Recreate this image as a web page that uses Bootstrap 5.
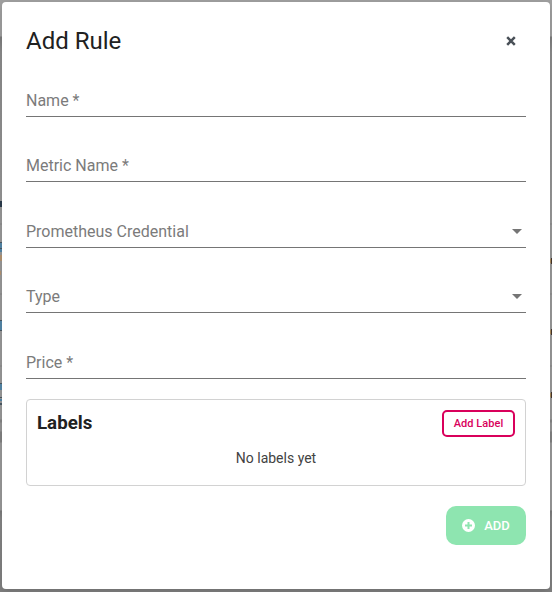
<!DOCTYPE html>
<html lang="en">
<head>
<meta charset="utf-8">
<meta name="viewport" content="width=device-width, initial-scale=1">
<title>Add Rule</title>
<link href="https://cdn.jsdelivr.net/npm/bootstrap@5.3.0/dist/css/bootstrap.min.css" rel="stylesheet">
<style>
body{font-family:Roboto,"Liberation Sans",sans-serif;color:#212121;height:592px;padding:2px 2px 3px;overflow:hidden;
background:linear-gradient(#a0a0a0 0 36px,#7c7c7c 37px,#8c8c8c 52px,#929292 160px,#999 223px,#888 224px,#999 225px 293px,#888 294px,#999 295px 365px,#888 366px,#999 367px 419px,#858585 420px 422px,#959595 423px 431px,#828282 432px 442px,#999 443px 510px,#7a7a7a 511px,#858585 518px,#808080 592px)}
.dialog-box{height:587px;border-radius:4px;padding:24px;position:relative;box-shadow:0 3px 8px rgba(0,0,0,.14)}
.edge-bit{position:absolute;width:2px}
.edge-l{left:-2px}.edge-r{right:-2px}
.dialog-title{font-size:24px;line-height:30px;font-weight:400}
.dialog-head{margin-bottom:11.75px}
.close-x{width:30px;height:30px;color:#495057}
.field{height:65.5px;padding-top:16px}
.field-line{height:33px;border-bottom:1px solid #757575;font-size:16px;line-height:24px;color:#7b7b7b;padding:2.3px 4px 0 0}
.caret{border:5px solid transparent;border-top-color:#757575;border-bottom:0;margin-top:-1px}
.labels-box{height:87px;border:1px solid #d2d2d2;border-radius:4px;padding:10px;margin-top:4px}
.labels-title{font-size:18.72px;line-height:26px;font-weight:700}
.btn-label{width:73px;height:27px;border:2px solid #d9005b;border-radius:5px;color:#d9005b;font-size:11px;font-weight:500;line-height:14px;letter-spacing:.05px}
.empty-text{font-size:14px;line-height:20px;margin-top:11px;color:#424242}
.btn-save,.btn-save:disabled{width:80px;height:39px;background:#8ee5b0;color:#fff;opacity:1;border:0;border-radius:10px;font-size:13px;font-weight:500;margin-top:20px}
.save-text{margin-left:9px}
</style>
<script src="https://cdn.jsdelivr.net/npm/bootstrap@5.3.0/dist/js/bootstrap.bundle.min.js"></script>
</head>
<body>
<main class="dialog-box bg-white">
  <svg class="edge-bit edge-l" style="top:198px" height="210" viewBox="0 0 2 210"><path fill="#283848" d="M0 1h2v6H0z"/><path fill="#46545e" d="M0 42h2v1H0zM0 48h2v1H0zM0 120h2v1H0zM0 130h2v1H0zM0 183h2v1H0zM0 197h2v1H0zM0 203h2v2H0z"/><path fill="#4f7f9f" d="M0 43h2v5H0zM0 49h2v3H0zM0 121h2v9H0zM0 184h2v6H0zM0 199h2v2H0z"/><path fill="#aa8c6c" d="M0 55h2v6H0zM0 71h1v4H0z"/></svg>
  <svg class="edge-bit edge-r" style="top:256px" height="144" viewBox="0 0 2 144"><path fill="#403229" d="M1 0h1v6H1zM1 71h1v6H1zM1 134h1v6H1z"/><path fill="#a28456" d="M0 1h1v4H0zM0 72h1v4H0zM0 135h1v4H0z"/></svg>
  <header class="dialog-head d-flex justify-content-between align-items-center">
    <h1 class="dialog-title m-0">Add Rule</h1>
    <button class="close-x btn p-0 border-0 d-flex align-items-center justify-content-center" aria-label="Close"><svg width="10" height="10" viewBox="0 0 10 10"><path d="M1.2 1.2l7.6 7.6m0-7.6l-7.6 7.6" stroke="currentColor" stroke-width="2.5"/></svg></button>
  </header>
  <form>
    <div class="field"><div class="field-line d-flex justify-content-between align-items-center">Name *</div></div>
    <div class="field"><div class="field-line d-flex justify-content-between align-items-center">Metric Name *</div></div>
    <div class="field"><div class="field-line d-flex justify-content-between align-items-center">Prometheus Credential <i class="caret"></i></div></div>
    <div class="field"><div class="field-line d-flex justify-content-between align-items-center">Type <i class="caret"></i></div></div>
    <div class="field"><div class="field-line d-flex justify-content-between align-items-center">Price *</div></div>
    <section class="labels-box">
      <div class="d-flex justify-content-between">
        <h2 class="labels-title m-0">Labels</h2>
        <button type="button" class="btn btn-label p-0">Add Label</button>
      </div>
      <div class="empty-text text-center">No labels yet</div>
    </section>
    <div class="d-flex justify-content-end">
      <button class="btn btn-save p-0 d-flex align-items-center justify-content-center" disabled><svg width="13" height="13" viewBox="0 0 13 13"><circle cx="6.5" cy="6.5" r="6.5" fill="#fff"/><path d="M6.5 3v7M3 6.5h7" stroke="#8ee5b0" stroke-width="2"/></svg><span class="save-text">ADD</span></button>
    </div>
  </form>
</main>
</body>
</html>
